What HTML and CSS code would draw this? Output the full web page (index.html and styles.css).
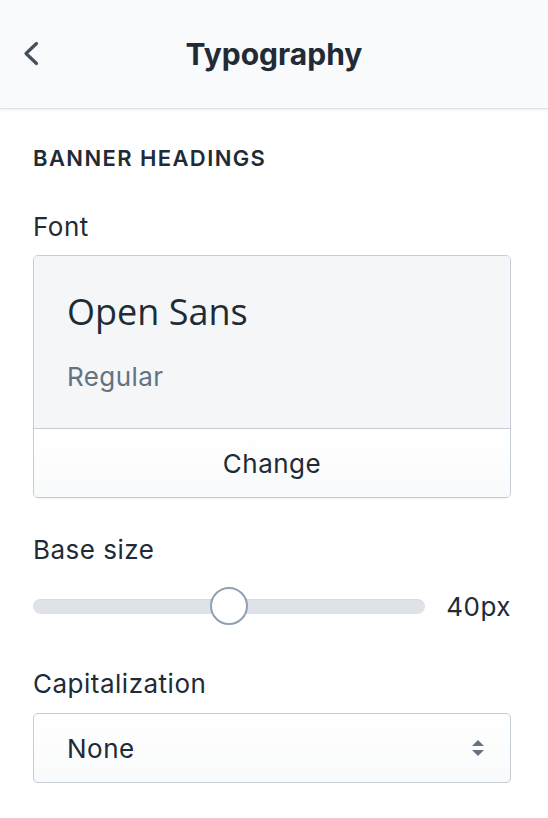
FILE: index.html
```html
<!DOCTYPE html>
<html lang="en">
<head>
    <meta charset="UTF-8">
    <meta name="viewport" content="width=device-width, initial-scale=1.0">
    <title>Typography</title>
    <link rel="stylesheet" href="styles.css">
</head>
<body>
    <div class="panel">
        <header class="topbar">
            <button class="back" aria-label="Back">
                <svg width="16" height="26" viewBox="0 0 16 26">
                    <path d="M13.5 2.5 L3 12.5 L13.5 22.5" fill="none" stroke="#454f5b" stroke-width="3.2" stroke-linecap="round" stroke-linejoin="round"/>
                </svg>
            </button>
            <h1 class="title">Typography</h1>
            <span></span>
        </header>

        <div class="content">
            <h2 class="subheading">Banner headings</h2>

            <label class="label">Font</label>
            <div class="font-card">
                <div class="font-preview">
                    <div class="font-name">Open Sans</div>
                    <div class="font-style">Regular</div>
                </div>
                <button class="change-btn">Change</button>
            </div>

            <label class="label" for="baseSize">Base size</label>
            <div class="range-row">
                <input type="range" id="baseSize" min="20" max="60" value="40">
                <span class="range-value">40px</span>
            </div>

            <label class="label" for="caps">Capitalization</label>
            <div class="select-wrap">
                <select id="caps">
                    <option>None</option>
                    <option>Uppercase</option>
                    <option>Lowercase</option>
                </select>
                <!-- up / down arrows -->
                <svg class="select-arrows" width="14" height="20" viewBox="0 0 14 20">
                    <path d="M7 2 L13 8 L1 8 Z" fill="#637381"/>
                    <path d="M7 18 L13 12 L1 12 Z" fill="#637381"/>
                </svg>
            </div>
        </div>
    </div>
</body>
</html>
```

FILE: styles.css
```css
body {
    margin: 0;
    font-family: "Inter", "Roboto", "Liberation Sans", sans-serif;
    color: #212b36;
    background: #ffffff;
}
.panel {
    width: 548px;
}
.topbar {
    height: 108px;
    display: grid;
    grid-template-columns: 1fr auto 1fr;
    align-items: center;
    background: #f9fafb;
    border-bottom: 1px solid #dfe3e8;
    box-shadow: 0 1px 3px rgba(0, 0, 0, 0.08);
}
.back {
    justify-self: start;
    margin-left: 23px;
    padding: 0;
    border: none;
    background: none;
    display: flex;
}
.title {
    margin: 0;
    font-size: 30px;
    font-weight: 700;
    color: #212b36;
    line-height: 36px;
}
.content {
    padding: 35px 37px 0 33px;
}
.subheading {
    margin: 0;
    font-size: 22px;
    line-height: 28px;
    font-weight: 600;
    letter-spacing: 1.4px;
    text-transform: uppercase;
    color: #212b36;
}
.label {
    display: block;
    font-size: 26px;
    line-height: 32px;
    letter-spacing: 0.5px;
    color: #212b36;
}
.subheading + .label {
    margin-top: 39px;
}
.font-card {
    margin-top: 12px;
    border: 1px solid #c4cdd5;
    border-radius: 5px;
    overflow: hidden;
    box-shadow: 0 1px 0 rgba(22, 29, 37, 0.05);
}
.font-preview {
    background: #f4f6f8;
    padding: 34px 33px 35px;
    border-bottom: 1px solid #c4cdd5;
}
.font-name {
    font-family: "Open Sans", sans-serif;
    font-size: 36px;
    line-height: 44px;
    color: #212b36;
}
.font-style {
    margin-top: 27px;
    font-size: 26px;
    line-height: 32px;
    letter-spacing: 0.4px;
    color: #637381;
}
.change-btn {
    display: block;
    width: 100%;
    height: 68px;
    border: none;
    background: linear-gradient(to bottom, #ffffff, #f9fafb);
    font-family: inherit;
    font-size: 26px;
    letter-spacing: 0.5px;
    color: #212b36;
    cursor: pointer;
}
.font-card + .label {
    margin-top: 36px;
}
.range-row {
    margin-top: 21px;
    display: flex;
    align-items: center;
    height: 38px;
}
.range-row input {
    -webkit-appearance: none;
    appearance: none;
    width: 392px;
    height: 38px;
    margin: 0;
    background: transparent;
}
.range-row input::-webkit-slider-runnable-track {
    height: 15px;
    border-radius: 8px;
    background: #dfe3e8;
    box-shadow: inset 0 1px 1px rgba(0, 0, 0, 0.04);
}
.range-row input::-webkit-slider-thumb {
    -webkit-appearance: none;
    width: 38px;
    height: 38px;
    margin-top: -11.5px;
    border-radius: 50%;
    background: #ffffff;
    border: 2px solid #8ea0b1;
    box-sizing: border-box;
}
.range-value {
    margin-left: auto;
    font-size: 26px;
    letter-spacing: 0.5px;
    color: #212b36;
}
.range-row + .label {
    margin-top: 43px;
}
.select-wrap {
    position: relative;
    margin-top: 13px;
}
.select-wrap select {
    -webkit-appearance: none;
    appearance: none;
    width: 100%;
    height: 70px;
    padding: 0 50px 0 33px;
    border: 1px solid #c4cdd5;
    border-radius: 5px;
    background: linear-gradient(to bottom, #ffffff, #f9fafb);
    box-shadow: 0 1px 0 rgba(22, 29, 37, 0.05);
    font-family: inherit;
    font-size: 26px;
    letter-spacing: 0.5px;
    color: #212b36;
}
.select-arrows {
    position: absolute;
    right: 26px;
    top: 25px;
    pointer-events: none;
}
```
